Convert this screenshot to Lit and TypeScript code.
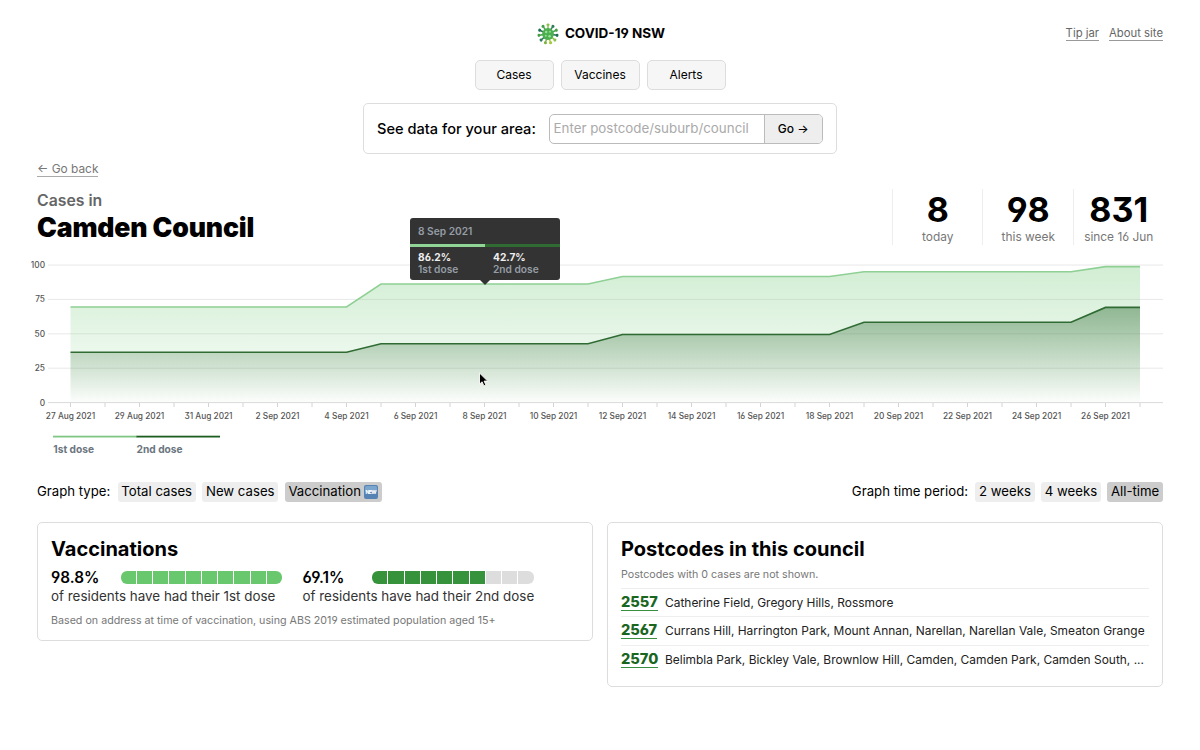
import { LitElement, html, svg, css } from "lit";
import { customElement } from "lit/decorators.js";
import { classMap } from "lit/directives/class-map.js";

const STEP = 34.5;
const LEFT = 70.5;
const months = (i: number) => (i < 5 ? `${27 + i} Aug 2021` : `${i - 4} Sep 2021`);
const series = (vals: number[]) =>
  Array.from({ length: 32 }, (_, i) => {
    const v = vals[i < 9 ? 0 : i < 16 ? 1 : i < 23 ? 2 : i < 30 ? 3 : 4];
    return `${LEFT + i * STEP},${v}`;
  }).join(" ");

@customElement("app-root")
export class AppRoot extends LitElement {
  static styles = css`
    :host { display: block; width: 1200px; height: 750px; overflow: hidden; background: #fff; color: #000;
      font-family: Inter, "Liberation Sans", sans-serif; font-size: 14.4px; position: relative;
      font-feature-settings: "cv03", "cv04", "cv09"; font-optical-sizing: none; }
    * { box-sizing: border-box; }
    .wrap { padding: 0 37px; }
    header { display: grid; grid-template-columns: 1fr auto 1fr; align-items: center; height: 60px; padding-top: 7px; }
    .brand { grid-column: 2; display: flex; align-items: center; gap: 6px; font-weight: 700; font-size: 13.5px; line-height: 20px; padding-left: 2px; }
    .brand span { padding-bottom: 1px; }
    .links { justify-self: end; display: flex; gap: 10px; font-size: 11.3px; line-height: 13px; padding-top: 1px; }
    .links a { color: #666; border-bottom: 1px solid #999; }
    nav { display: flex; justify-content: center; gap: 7px; }
    nav a { width: 79px; height: 30px; border: 1px solid #ddd; border-radius: 5px; background: #f6f6f6; text-align: center; line-height: 27px; font-size: 12px; }
    .search { width: 474px; height: 51px; margin: 13px auto 0; border: 1px solid #ddd; border-radius: 5px; display: flex; align-items: center; padding: 0 13px; justify-content: space-between; }
    .search .q { font-weight: 500; font-size: 14.6px; }
    .field { display: flex; width: 274px; height: 30px; border: 1px solid #bbb; border-radius: 5px; overflow: hidden; }
    .ph { flex: 1; color: #aaa; font-size: 13.35px; line-height: 27px; padding-left: 3.5px; }
    .go { width: 58.5px; border-left: 1px solid #bbb; background: #eee; font-size: 12px; font-weight: 500; line-height: 28px; text-align: center; }
    .back { display: inline-block; margin-top: 7px; font-size: 11.9px; line-height: 15px; color: #777; border-bottom: 1px solid #aaa; }
    .title { display: flex; justify-content: space-between; height: 56px; margin-top: 12px; }
    .sub { font-size: 15.8px; line-height: 20px; font-weight: 600; color: #666; margin-top: 2px; }
    h1 { margin: 0; font-size: 26.6px; line-height: 32px; font-weight: 900; letter-spacing: -0.16px; }
    .stats { display: flex; }
    .stat { width: 90.5px; border-left: 1px solid #eee; text-align: center; padding-left: 1px; }
    .num { font-size: 34px; line-height: 41px; height: 40px; font-weight: 700; }
    .cap { font-size: 11.9px; line-height: 16px; color: #777; }
    .chart { position: relative; height: 215px; }
    .chart svg { display: block; }
    .tick { font-size: 8.3px; font-weight: 500; fill: #555; }
    .legend { font-size: 10.2px; font-weight: 700; fill: #6c7680; }
    .tip { position: absolute; left: 409.5px; top: -27.5px; width: 150px; height: 62.5px; border-radius: 3px; background: #333; color: #959da5; font-size: 10.2px; font-weight: 600; }
    .tip .date { height: 26px; line-height: 27px; padding-left: 8.5px; }
    .tip .cols { display: flex; }
    .tip .col { flex: 1; border-top: 3px solid #90d595; padding: 4px 0 0 8.5px; line-height: 12.4px; }
    .tip .col.two { border-color: #2f6b33; }
    .tip b { display: block; color: #eee; font-weight: 700; }
    .arrow { position: absolute; left: 70px; top: 62px; border: 5px solid transparent; border-top-color: #333; border-bottom: 0; }
    .cursor { position: absolute; left: 477.5px; top: 372px; }
    .controls { display: flex; justify-content: space-between; height: 20px; margin-top: 21.5px; }
    .group { display: flex; align-items: center; gap: 6.5px; font-size: 13.2px; }
    .group > span { line-height: 19px; height: 20px; }
    .group > span:first-child { padding-right: .8px; }
    .group .chip { padding: 0 3.7px 1px; border-radius: 3px; background: #eee; display: flex; align-items: center; gap: 3.5px; }
    .group .chip.on { background: #ccc; }
    .chip svg { position: relative; top: .5px; }
    .cards { display: grid; grid-template-columns: 1fr 1fr; gap: 14px; align-items: start; margin-top: 20.5px; }
    .card { border: 1px solid #ddd; border-radius: 5px; padding: 13px; }
    .vac { height: 119px; } .post { height: 165px; }
    h2 { margin: 0; font-size: 20.05px; line-height: 26px; font-weight: 700; }
    .doses { display: flex; gap: 20.5px; }
    .dose { color: #333; font-size: 13.42px; line-height: 18px; width: 231px; white-space: nowrap; }
    .row { display: flex; align-items: center; justify-content: space-between; height: 19px; margin-top: 6px; }
    .row b { font-size: 15.3px; font-weight: 600; color: #000; }
    .bar { display: flex; gap: 1px; width: 161.5px; height: 13px; border-radius: 6px; overflow: hidden; }
    .bar i { flex: 1; background: #ddd; } .bar .a { background: #69c76d; } .bar .b { background: #37933b; }
    .note { color: #777; font-size: 10.7px; line-height: 14px; }
    .vac .note { margin-top: 9px; } .post .note { margin: 6px 0 5.7px; }
    .pc { display: flex; align-items: center; height: 28.5px; border-top: 1px solid #eee; font-size: 11.95px; color: #222; }
    .pc a { color: #1b661f; font-size: 14.6px; font-weight: 800; line-height: 16px; border-bottom: 1px solid #388e3c; }
    .pc .code { width: 44px; display: flex; flex: none; }
  `;

  private virus() {
    const cols = ["#8bc34a", "#2f7d5b", "#43a047", "#1f6f50", "#8bc34a", "#a3c93a", "#7cb342", "#2f7d5b", "#43a047", "#1f6f50", "#43a047"];
    return html`<svg width="22" height="22" viewBox="-11 -11 22 22">
      ${cols.map((c, i) => svg`<g transform=${`rotate(${(i * 360) / 11})`}><path d="M0-4V-9" stroke=${c} stroke-width="1.5"/><ellipse cy="-9.2" rx="1.6" ry="1.4" fill=${c}/></g>`)}
      <circle r="5.9" fill="#4caf50"/><circle cx="-1.8" cy="-2" r="1.2" fill="#9be29a"/><circle cx="2" cy="-2.2" r="1" fill="#8fdc8c"/><circle cx="-2.2" cy="1.8" r="1" fill="#8fdc8c"/><circle cx="1.6" cy="2.2" r="1.3" fill="#9be29a"/>
    </svg>`;
  }

  private chart() {
    const first = series([307, 284, 276.5, 271.8, 266.6]);
    const second = series([352.2, 343.8, 334.5, 322.3, 307.4]);
    const end = LEFT + 31 * STEP;
    return html`<svg width="1200" height="215" viewBox="0 245 1200 215">
      <defs>
        <linearGradient id="g1" x1="0" y1="0" x2="0" y2="1"><stop offset="0" stop-color="#81cf86" stop-opacity=".36"/><stop offset=".5" stop-color="#81cf86" stop-opacity=".2"/><stop offset="1" stop-color="#81cf86" stop-opacity=".02"/></linearGradient>
        <linearGradient id="g2" x1="0" y1="0" x2="0" y2="1"><stop offset="0" stop-color="#1b5e20" stop-opacity=".4"/><stop offset=".5" stop-color="#1b5e20" stop-opacity=".2"/><stop offset="1" stop-color="#1b5e20" stop-opacity="0"/></linearGradient>
      </defs>
      ${[100, 75, 50, 25, 0].map((v, i) => {
        const y = 265 + i * 34.4;
        return svg`<path d=${`M48 ${y}H1163`} stroke=${v ? "#e8e8e8" : "#dadada"}/><text class="tick" x="45" y=${y + 3} text-anchor="end">${v}</text>`;
      })}
      ${Array.from({ length: 32 }, (_, i) => svg`<path d=${`M${LEFT + i * STEP} 403v4`} stroke="#d4d4d4"/>
        ${i % 2 ? "" : svg`<text class="tick" x=${LEFT + i * STEP} y="419.3" text-anchor="middle">${months(i)}</text>`}`)}
      <polygon points=${`${LEFT},402.5 ${first} ${end},402.5`} fill="url(#g1)"/>
      <polyline points=${first} fill="none" stroke="#8fd094" stroke-width="1.6"/>
      <polygon points=${`${LEFT},402.5 ${second} ${end},402.5`} fill="url(#g2)"/>
      <polyline points=${second} fill="none" stroke="#2f6b33" stroke-width="1.6"/>
      <rect x="53" y="435.7" width="84" height="1.8" fill="#81c784"/><rect x="136.5" y="435.7" width="83.5" height="1.8" fill="#1b5e20"/>
      <text class="legend" x="53.3" y="452.6">1st dose</text><text class="legend" x="136.6" y="452.6">2nd dose</text>
    </svg>`;
  }

  private bar(n: number, cls: string) {
    return html`<div class="bar">${Array.from({ length: 10 }, (_, i) => html`<i class=${i < n ? cls : ""}></i>`)}</div>`;
  }

  render() {
    const chip = (t: string, on = false, extra: unknown = "") => html`<span class=${classMap({ chip: true, on })}>${t}${extra}</span>`;
    const badge = html`<svg width="14" height="14" viewBox="0 0 14 14"><rect width="14" height="14" rx="2" fill="#5584b4"/><rect x="1" y="1" width="12" height="6" rx="1.5" fill="#7ba5cc"/><text x="7" y="9.2" font-size="5" font-weight="800" fill="#fff" text-anchor="middle" textLength="11">NEW</text></svg>`;
    return html`
      <div class="wrap">
        <header><div class="brand">${this.virus()}<span>COVID-19 NSW</span></div><div class="links"><a>Tip jar</a><a>About site</a></div></header>
        <nav><a>Cases</a><a>Vaccines</a><a>Alerts</a></nav>
        <div class="search"><span class="q">See data for your area:</span><div class="field"><div class="ph">Enter postcode/suburb/council</div><div class="go">Go →</div></div></div>
        <a class="back">← Go back</a>
        <div class="title">
          <div><div class="sub">Cases in</div><h1>Camden Council</h1></div>
          <div class="stats">${[["8", "today"], ["98", "this week"], ["831", "since 16 Jun"]].map(([n, c]) => html`<div class="stat"><div class="num">${n}</div><div class="cap">${c}</div></div>`)}</div>
        </div>
      </div>
      <div class="chart">${this.chart()}
        <div class="tip"><div class="date">8 Sep 2021</div><div class="cols"><div class="col"><b>86.2%</b>1st dose</div><div class="col two"><b>42.7%</b>2nd dose</div></div><div class="arrow"></div></div>
      </div>
      <div class="wrap">
        <div class="controls">
          <div class="group"><span>Graph type:</span>${chip("Total cases")}${chip("New cases")}${chip("Vaccination", true, badge)}</div>
          <div class="group"><span>Graph time period:</span>${chip("2 weeks")}${chip("4 weeks")}${chip("All-time", true)}</div>
        </div>
        <div class="cards">
          <section class="card vac"><h2>Vaccinations</h2>
            <div class="doses">
              <div class="dose"><div class="row"><b>98.8%</b>${this.bar(10, "a")}</div>of residents have had their 1st dose</div>
              <div class="dose"><div class="row"><b>69.1%</b>${this.bar(7, "b")}</div>of residents have had their 2nd dose</div>
            </div>
            <div class="note">Based on address at time of vaccination, using ABS 2019 estimated population aged 15+</div>
          </section>
          <section class="card post"><h2>Postcodes in this council</h2><div class="note">Postcodes with 0 cases are not shown.</div>
            ${[["2557", "Catherine Field, Gregory Hills, Rossmore"], ["2567", "Currans Hill, Harrington Park, Mount Annan, Narellan, Narellan Vale, Smeaton Grange"], ["2570", "Belimbla Park, Bickley Vale, Brownlow Hill, Camden, Camden Park, Camden South, ..."]].map(([p, t]) => html`<div class="pc"><div class="code"><a>${p}</a></div><span>${t}</span></div>`)}
          </section>
        </div>
      </div>
      <svg class="cursor" width="12" height="16" viewBox="0 0 12 16"><path d="M1.5 1v11.2l2.6-2.4 1.8 4.1 2-.9-1.8-3.9h3.6z" fill="#000" stroke="#fff" stroke-width=".9"/></svg>
    `;
  }
}
